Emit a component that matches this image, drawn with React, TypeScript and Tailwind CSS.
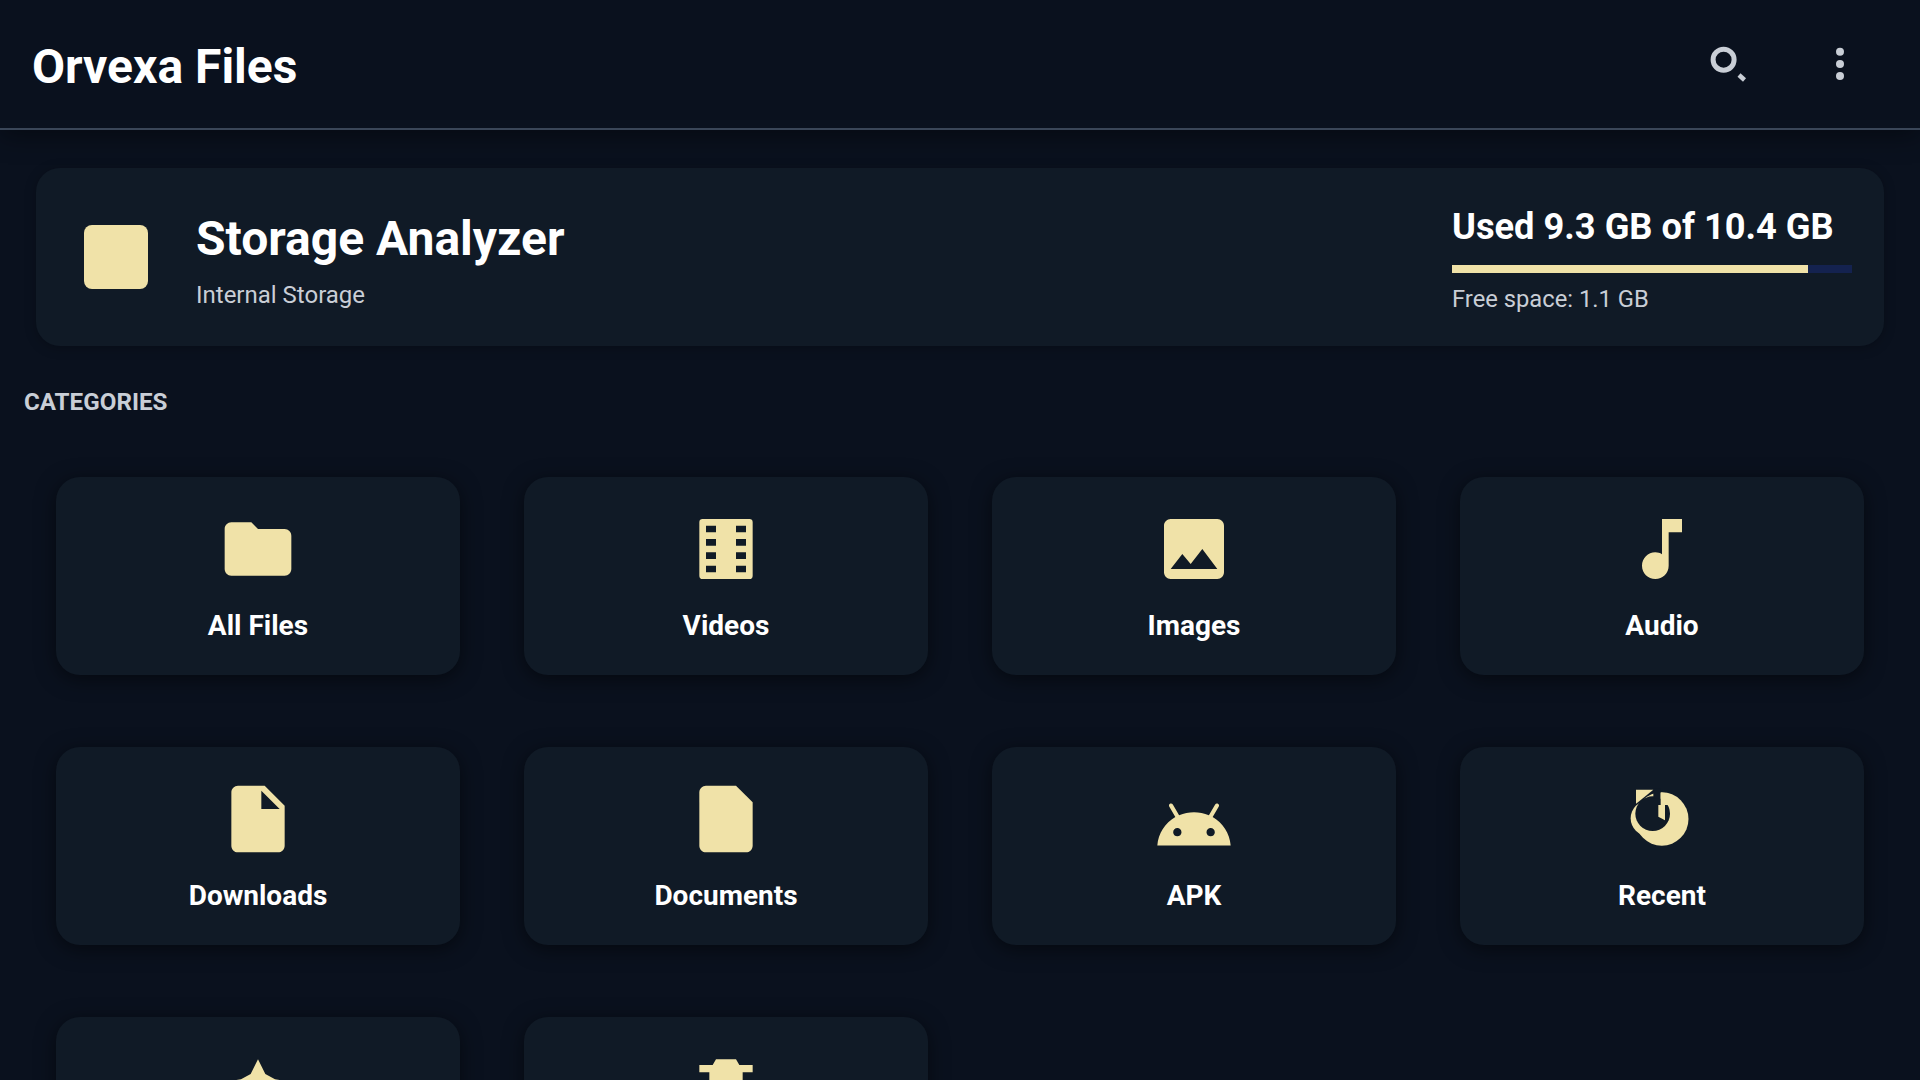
const ICON = "#f0e2a8"
const CARD = "#101a26"

function Glyph({ children }: { children: React.ReactNode }) {
  return (
    <svg viewBox="0 0 24 24" fill={ICON} fillRule="evenodd" className="w-20 h-20 shrink-0">
      {children}
    </svg>
  )
}

// the last two tiles run off the bottom of the screen, their labels are not visible
const categories: { label?: string; icon: React.ReactNode }[] = [
  { label: "All Files", icon: <path d="M10 4H4c-1.1 0-2 .9-2 2v12c0 1.1.9 2 2 2h16c1.1 0 2-.9 2-2V8c0-1.1-.9-2-2-2h-8l-2-2z" /> },
  {
    label: "Videos",
    icon: <path d="M5 3h14a1 1 0 0 1 1 1v16a1 1 0 0 1-1 1H5a1 1 0 0 1-1-1V4a1 1 0 0 1 1-1zM6 5v2h3V5H6zm0 4v2h3V9H6zm0 4v2h3v-2H6zm0 4v2h3v-2H6zM15 5v2h3V5h-3zm0 4v2h3V9h-3zm0 4v2h3v-2h-3zm0 4v2h3v-2h-3z" />,
  },
  { label: "Images", icon: <path d="M21 19V5c0-1.1-.9-2-2-2H5c-1.1 0-2 .9-2 2v14c0 1.1.9 2 2 2h14c1.1 0 2-.9 2-2zM8.5 13.5l2.5 3.01L14.5 12l4.5 6H5l3.5-4.5z" /> },
  { label: "Audio", icon: <path d="M12 3v10.55c-.59-.34-1.27-.55-2-.55-2.21 0-4 1.79-4 4s1.79 4 4 4 4-1.79 4-4V7h4V3h-6z" /> },
  { label: "Downloads", icon: <path d="M6 2c-1.1 0-1.99.9-1.99 2L4 20c0 1.1.89 2 1.99 2H18c1.1 0 2-.9 2-2V8l-6-6H6zm7 7V3.5L18.5 9H13z" /> },
  { label: "Documents", icon: <path d="M6 2c-1.1 0-2 .9-2 2v16c0 1.1.9 2 2 2h12c1.1 0 2-.9 2-2V7l-5-5H6z" /> },
  {
    label: "APK",
    icon: (
      <path
        transform="translate(0 1.95)"
        d="M17.6 9.48l1.84-3.18c.16-.31.04-.69-.26-.85-.29-.15-.65-.06-.83.22l-1.88 3.24c-2.86-1.21-6.08-1.21-8.94 0L5.65 5.67c-.19-.29-.58-.38-.87-.2-.28.18-.37.54-.22.83L6.4 9.48C3.3 11.25 1.28 14.44 1 18h22c-.28-3.56-2.3-6.75-5.4-8.52zM7 15.25c-.69 0-1.25-.56-1.25-1.25s.56-1.25 1.25-1.25 1.25.56 1.25 1.25-.56 1.25-1.25 1.25zm10 0c-.69 0-1.25-.56-1.25-1.25s.56-1.25 1.25-1.25 1.25.56 1.25 1.25-.56 1.25-1.25 1.25z"
      />
    ),
  },
  {
    label: "Recent",
    icon: (
      <>
        <circle cx="11.95" cy="12" r="8" />
        <circle cx="7.9" cy="11.8" r="5.3" />
        <circle cx="9.2" cy="10.4" r="5.2" fill={CARD} />
        <rect x="9.4" y="2.8" width="2.2" height="3" fill={CARD} />
        <path d="M11.6 4.1Q13 4.1 14.4 4.5V7.8H11.6z" />
        <path d="M10.9 7.8H12.9V12.4L10.9 11.3z" />
        <path d="M4.2 3.2H9.4L4.6 7.1 4.2 7.4z" />
      </>
    ),
  },
  { icon: <path d="M12 3.1L14.2 7.5 17.1 9.1 22 9.8 16.54 13.97 18.18 21 12 17.27 5.82 21 7.46 13.97 2 9.8 6.9 9.1 9.8 7.5z" /> },
  { icon: <path d="M7 7H17V21H7zM4 4.8H8L9 3.1H15L16 4.8H20V7H4z" /> },
]

export default function App() {
  return (
    <div className="h-screen w-full overflow-hidden bg-[#0a111e] text-white font-['Roboto',sans-serif] flex flex-col">
      <header className="relative z-10 h-[130px] shrink-0 border-b-2 border-[#3a4658] bg-[#0a111e] shadow-[0_6px_24px_rgba(0,0,0,0.4)] flex items-center justify-between pl-[32px] pr-[72px]">
        <h1 className="pt-[5px] text-[48px] font-bold leading-none">Orvexa Files</h1>
        <div className="flex items-center gap-[84px]">
          <svg viewBox="0 0 40 40" className="w-10 h-10" fill="none" stroke="#c9ced6">
            <circle cx="15.6" cy="15.7" r="10.5" strokeWidth="5" />
            <path d="M31 31l5.5 5" strokeWidth="4.5" />
          </svg>
          <svg viewBox="0 0 16 40" className="w-4 h-10" fill="#c9ced6">
            <circle cx="8" cy="7.7" r="4" />
            <circle cx="8" cy="20" r="4" />
            <circle cx="8" cy="32" r="4" />
          </svg>
        </div>
      </header>

      <main className="flex-1">
        <section className="mt-[38px] mx-9 h-[178px] rounded-3xl bg-[#101a26] shadow-[0_2px_12px_rgba(0,0,0,0.25)] flex items-center justify-between pl-12 pr-8">
          <div className="flex items-center gap-12">
            <div className="w-16 h-16 rounded-lg bg-[#f0e2a8]" />
            <div className="pt-[6px]">
              <div className="text-[48px] font-bold leading-[56px]">Storage Analyzer</div>
              <div className="mt-[14px] text-[24px] leading-7 text-[#c9ced6]">Internal Storage</div>
            </div>
          </div>
          <div className="w-[400px] pt-[5px]">
            <div className="text-[36.25px] font-bold leading-[42px]">Used 9.3 GB of 10.4 GB</div>
            <div className="mt-[17px] h-2 bg-[#14224f]">
              <div className="h-full w-[89%] bg-[#f0e2a8]" />
            </div>
            <div className="mt-3 text-[23.75px] leading-7 text-[#c9ced6]">Free space: 1.1 GB</div>
          </div>
        </section>

        <h2 className="mt-[42px] ml-6 text-[24.2px] font-bold leading-7 text-[#c9ced6]">CATEGORIES</h2>

        <div className="mt-[61px] mx-14 grid grid-cols-4 gap-x-16 gap-y-[72px]">
          {categories.map((c, i) => (
            <div key={i} className="h-[198px] rounded-3xl bg-[#101a26] shadow-[0_4px_20px_rgba(0,0,0,0.5)] flex flex-col items-center pt-8">
              <Glyph>{c.icon}</Glyph>
              {c.label && <div className="mt-[21px] text-[28px] font-bold leading-8">{c.label}</div>}
            </div>
          ))}
        </div>
      </main>
    </div>
  )
}
